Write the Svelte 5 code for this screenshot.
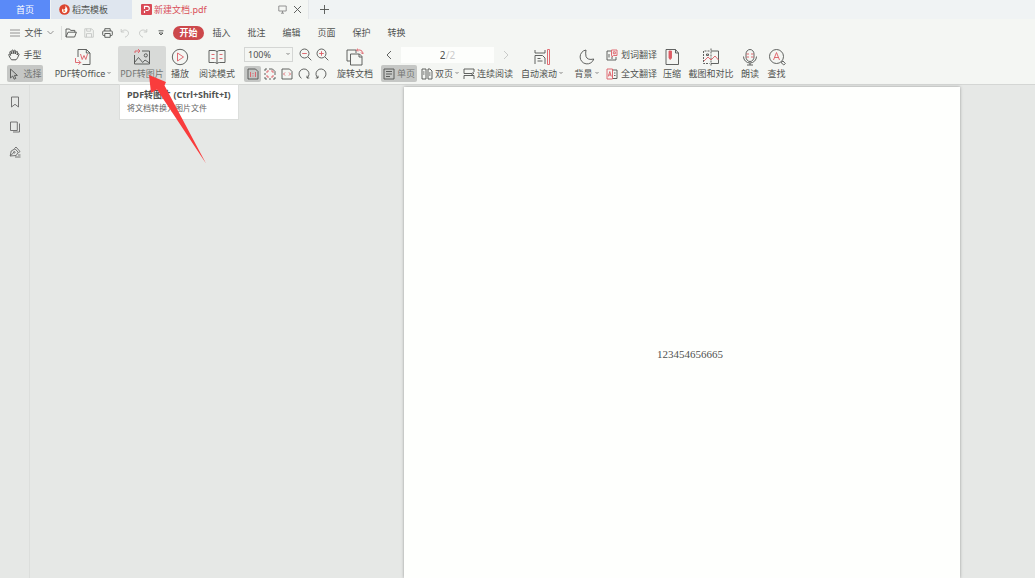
<script lang="ts">
  let zoom = $state('100%')
  let page = $state('2')

  const tabs = ['插入', '批注', '编辑', '页面', '保护', '转换']
</script>

{#snippet caret()}
  <svg class="caret" width="4" height="6" viewBox="0 0 4 6"><path d="M.5 1L2 2.500 3.500 1" /></svg>
{/snippet}

{#snippet chevron(dir: string)}
  <svg width="8" height="10" viewBox="0 0 8 10"><path d={dir === 'left' ? 'M6 1L2 5l4 4' : 'M2 1l4 4-4 4'} /></svg>
{/snippet}

<div class="app">
  <header class="titlebar">
    <button class="home">首页</button>
    <button class="doc template">
      <svg width="11" height="11" viewBox="0 0 11 11"><circle class="flame" cx="5.5" cy="5.5" r="5.3" /><path class="solid" d="M6.4 1.2C7 3 9 4 8.4 6.6 8 8.6 6.4 9.5 4.8 9 2.8 8.4 2.4 6 3.8 4.6 4 5.5 4.4 5.8 5 5.8 6.6 5 6.6 3 6.4 1.2z" /><circle class="core" cx="5.2" cy="7" r="1.1" /></svg>
      稻壳模板
    </button>
    <div class="doc current">
      <svg width="11" height="11" viewBox="0 0 11 11"><rect class="pdf" width="11" height="11" rx="1" /><path class="white" d="M3.5 9V6.8M3.5 5V2.3h2.7a2.1 2.1 0 010 4.2H4.7" /></svg>
      <span class="name">新建文档.pdf</span>
      <button aria-label="演示">
        <svg class="soft" width="9" height="9" viewBox="0 0 9 9"><path d="M.8 1h7.4v5H.8zM4.5 6v2M3 8.2h3" /></svg>
      </button>
      <button aria-label="关闭">
        <svg width="9" height="9" viewBox="0 0 9 9"><path d="M1 1l7 7M8 1L1 8" /></svg>
      </button>
    </div>
    <button class="add" aria-label="新建">
      <svg width="9" height="9" viewBox="0 0 9 9"><path d="M4.5 0v9M0 4.5h9" /></svg>
    </button>
  </header>

  <nav class="menubar">
    <button class="file">
      <svg class="soft" width="10" height="8" viewBox="0 0 10 8"><path d="M0 1h10M0 4h10M0 7h10" /></svg>
      文件
      <svg class="soft" width="7" height="5" viewBox="0 0 7 5"><path d="M.5 1l3 3 3-3" /></svg>
    </button>
    <div class="quick">
      <button aria-label="打开">
        <svg width="12" height="10" viewBox="0 0 12 10"><path d="M1 8.8V1h3.6l1 1.4h4.2v1.8M1 9l2-4.8h8.4L9.6 9z" /></svg>
      </button>
      <button aria-label="保存" disabled>
        <svg width="10" height="10" viewBox="0 0 10 10"><path d="M.8.8h6.800l1.700 1.700v6.700H.8zM2.700.8v2.400h4V.8M2.500 9.200V5.600h5v3.600" /></svg>
      </button>
      <button aria-label="打印">
        <svg width="11" height="10" viewBox="0 0 11 10"><path d="M2.8 3V.7h5.4V3M2.8 7.5H1.5Q.7 7.5.7 6.7V3.8Q.7 3 1.5 3h8q.8 0 .8.8v2.900q0 .8-.8.8H8.200M2.800 5.500h5.400v3.800H2.800z" /></svg>
      </button>
      <button aria-label="撤销" disabled>
        <svg width="10" height="10" viewBox="0 0 10 10"><path d="M1.2 1v3h3M1.4 3.8C3.8.8 8.5 1.8 8.5 5.2 8.5 7.4 6.6 8.4 5 9.2" /></svg>
      </button>
      <button aria-label="恢复" disabled>
        <svg width="10" height="10" viewBox="0 0 10 10"><path d="M8.8 1v3h-3M8.6 3.8C6.2.8 1.5 1.8 1.5 5.2 1.5 7.4 3.4 8.4 5 9.2" /></svg>
      </button>
      <button aria-label="更多">
        <svg width="6" height="6" viewBox="0 0 6 6"><path d="M.5.8h5M1 3l2 2 2-2z" /></svg>
      </button>
    </div>
    <button class="pill">开始</button>
    {#each tabs as tab}
      <button class="tab">{tab}</button>
    {/each}
  </nav>

  <div class="ribbon">
    <div class="stack modes">
      <button class="small">
        <svg width="12" height="12" viewBox="0 0 12 12"><path class="heavy" d="M3.5 10.8C2.2 9 .8 7 .8 5.4c.6-.6 1.4 0 1.8 1L1.8 3c.2-.8 1-.8 1.3 0l.8 2L3.8 1.6c.2-.8 1.2-.8 1.4 0l.5 3 .4-3c.3-.8 1.2-.7 1.3.1L7.2 5l1.2-2.4c.5-.6 1.3-.2 1.2.6L9 6l1-1.2c.7-.4 1.2.1 1 .8C10 8 9.3 9.6 8 10.8z" /></svg>
        手型
      </button>
      <button class="small on">
        <svg width="12" height="12" viewBox="0 0 12 12"><path d="M2.5 1v9l2.2-2 1.5 3.2 1.6-.8-1.4-3h3z" /></svg>
        <span>选择</span>
      </button>
    </div>

    <button class="big office">
      <svg width="18" height="18" viewBox="0 0 18 18"><path d="M4 9V1.5h8.5L16 5v11.5H8.500M12.300 1.500V5H16" /><path class="red" d="M6.500 6l1.700 5.500L10 7.500l1.800 4L13.500 6M1.500 10v4.500h5M4.500 12.300l2.200 2.200-2.200 2.200" /></svg>
      <span>PDF转Office {@render caret()}</span>
    </button>

    <div class="anchor">
      <button class="big image on">
        <svg width="18" height="18" viewBox="0 0 18 18"><path d="M1.5 7v9h15V3H9M1.5 14.5l4-5 4.2 5L12 12l4.5 3" /><circle cx="12.8" cy="7.4" r="1.6" /><path class="red" d="M2 5V3h4.8M5 1l2 2-2 2" /></svg>
        <span>PDF转图片</span>
      </button>
      <div class="tooltip" role="tooltip">
        <strong>PDF转图片 (Ctrl+Shift+I)</strong>
        <p>将文档转换为图片文件</p>
      </div>
      <svg class="pointer" width="60" height="90" viewBox="0 0 60 90"><path d="M1 0L18 7l-1.500 3.500L58 88.500 9 14.500 3 18z" /></svg>
    </div>

    <button class="big short">
      <svg width="18" height="18" viewBox="0 0 18 18"><circle cx="9" cy="9" r="7.7" /><path class="red" d="M6.5 5v8l6-4z" /></svg>
      <span>播放</span>
    </button>
    <button class="big">
      <svg width="18" height="18" viewBox="0 0 18 18"><path d="M9 3.5v12M9 3.5Q7.5 2.5 6 2.5H1v12h5.5q1.5 0 2.5 1 1-1 2.5-1H17v-12h-5q-1.500 0-3 1z" /><path class="red" d="M3.5 6.500h3M3.500 10.500h3M11.500 6.500h3M11.500 10.500h3" /></svg>
      <span>阅读模式</span>
    </button>

    <div class="stack zoom">
      <div class="row">
        <div class="scale">
          <select aria-label="缩放比例" bind:value={zoom}>
            <option>50%</option>
            <option>100%</option>
            <option>200%</option>
          </select>
          {@render caret()}
        </div>
        <button class="tool" aria-label="缩小">
          <svg width="13" height="13" viewBox="0 0 13 13"><circle cx="5.5" cy="5.5" r="4.5" /><path d="M9 9l3.3 3.3" /><path class="red" d="M3.2 5.5h4.6" /></svg>
        </button>
        <button class="tool" aria-label="放大">
          <svg width="13" height="13" viewBox="0 0 13 13"><circle cx="5.5" cy="5.5" r="4.5" /><path d="M9 9l3.3 3.3" /><path class="red" d="M3.2 5.5h4.6M5.5 3.2v4.6" /></svg>
        </button>
      </div>
      <div class="row">
        <button class="tool on" aria-label="实际大小">
          <svg width="12" height="12" viewBox="0 0 12 12"><path d="M1 1h7.5L11 3.5V11H1z" /><path class="red" d="M3.5 4v5M6 5v1M6 7.5v1M8.5 4v5" /></svg>
        </button>
        <button class="tool" aria-label="适合页面">
          <svg width="12" height="12" viewBox="0 0 12 12"><path d="M3 1H1v2M1 5v2M1 9v2h2M5 11h2M9 11h2V9M11 7V3.5L8.5 1H5" /><path class="red" d="M3 5V3h2M7 3h2v2M3 7v2h2M9 7v2H7" /></svg>
        </button>
        <button class="tool" aria-label="适合宽度">
          <svg width="12" height="12" viewBox="0 0 12 12"><path d="M1 1h7.5L11 3.5V11H1z" /><path class="red" d="M4 4.5L2.5 6 4 7.5M8 4.5L9.5 6 8 7.5" /></svg>
        </button>
        <button class="tool" aria-label="向左旋转">
          <svg width="12" height="12" viewBox="0 0 12 12"><path d="M3.5 10.3A5 5 0 119 10M9 7.7V10h2.3" /></svg>
        </button>
        <button class="tool" aria-label="向右旋转">
          <svg width="12" height="12" viewBox="0 0 12 12"><path d="M8.5 10.3A5 5 0 103 10M3 7.7V10H.7" /></svg>
        </button>
      </div>
    </div>

    <button class="big">
      <svg width="18" height="18" viewBox="0 0 18 18"><path d="M4 13H1V2h9v3M4.500 6h9L16 8.500v8.500H4.500zM13 6v3h3" /><path class="red" d="M12 3.500l-1.500-1.500L12 .7M10.500 2H14q2.500 0 2.500 3.500M15 4.500l1.500 1.500L18 4.500" /></svg>
      <span>旋转文档</span>
    </button>

    <div class="stack view">
      <div class="row">
        <button class="tool" aria-label="上一页">{@render chevron('left')}</button>
        <label class="pager">
          <input aria-label="页码" bind:value={page} />
          <span>/2</span>
        </label>
        <button class="tool" aria-label="下一页" disabled>{@render chevron('right')}</button>
      </div>
      <div class="row layouts">
        <button class="small on">
          <svg width="12" height="12" viewBox="0 0 12 12"><path d="M1 1h10v10H1zM3 3.5h6M3 6h6M3 8.5h4" /></svg>
          <span>单页</span>
        </button>
        <button class="small">
          <svg width="12" height="12" viewBox="0 0 12 12"><path d="M1 1h4v10H1zM7 1h2l2 2v8H7zM2 4h1.5M2 6h1.5M8 5h1.5M8 7h1.5" /></svg>
          双页 {@render caret()}
        </button>
        <button class="small">
          <svg width="12" height="12" viewBox="0 0 12 12"><path d="M1 1v4.500h8L11 3.500V1zM11 11V7.500H1V11M11 5L8 7.500" /></svg>
          连续阅读
        </button>
      </div>
    </div>

    <button class="big scroll">
      <svg width="18" height="18" viewBox="0 0 18 18"><path d="M2 2v3h10V2M2 16V7.500h7.500L12 10v6M4.500 10.500h3M4.500 13h5" /><path class="red" d="M14.500 1.500h2v15h-2z" /></svg>
      <span>自动滚动 {@render caret()}</span>
    </button>
    <button class="big background">
      <svg width="18" height="18" viewBox="0 0 18 18"><path d="M8 2A7 7 0 1015.8 11Q9.5 12.5 8 8.5 7.3 5 8 2z" /></svg>
      <span>背景 {@render caret()}</span>
    </button>

    <div class="stack translate">
      <button class="small">
        <svg width="12" height="12" viewBox="0 0 12 12"><path d="M5 2H1v9h9V8M3 5v3.5M5 9h2" /><path class="red" d="M5.500 1H11v5.500H7.500L6 8V6.500h-.5zM7.300 2.800h2v2h-2z" /></svg>
        划词翻译
      </button>
      <button class="small">
        <svg width="12" height="12" viewBox="0 0 12 12"><path d="M6.5 2H11v8.5H6.5M8 5h1.5M8 7.5h1.5" /><path class="red" d="M6.5 1H1v10h5.5zM2.3 8.5l1.500-5 1.500 5M2.700 7h2.200" /></svg>
        全文翻译
      </button>
    </div>

    <button class="big short">
      <svg width="18" height="18" viewBox="0 0 18 18"><path d="M3 1.5h9.5L15.5 5v11.5H3zM12.500 1.500V5h3" /><path class="red fill" d="M6 3h2.500v7L7.200 11.500 6 10zM6 5h2.500M6 7h2.500" /></svg>
      <span>压缩</span>
    </button>
    <button class="big shot">
      <svg width="18" height="18" viewBox="0 0 18 18"><path d="M9 3h7.5v12.5H9" /><path class="dash" d="M7.5 3h-6v12.5h6M9 .5v17" /><path class="red" d="M2 13l4-4 3 3 4-4 3.5 4" /><path d="M4.5 6h2v1.5h-2z" /></svg>
      <span>截图和对比</span>
    </button>
    <button class="big short">
      <svg width="18" height="18" viewBox="0 0 18 18"><path d="M5 6a4 4.500 0 018 0v3a4 4.500 0 01-8 0zM2.500 8.500a6.500 6.500 0 0013 0M9 15v2M6 17h6" /><path class="red" d="M5.500 6H8M10 6h2.500M5.500 9H8M10 9h2.500" /></svg>
      <span>朗读</span>
    </button>
    <button class="big find">
      <svg width="18" height="18" viewBox="0 0 18 18"><circle cx="8.5" cy="8.5" r="7" /><path d="M13 14.500l2-1.500 2.300 2.500-1.500 1.500z" /><path class="red" d="M5.500 12l3-7.500 3 7.500M6.500 9.500h4" /></svg>
      <span>查找</span>
    </button>
  </div>

  <main>
    <aside>
      <button aria-label="书签">
        <svg width="12" height="12" viewBox="0 0 12 12"><path d="M2.5 1h7v10L6 8.300 2.500 11z" /></svg>
      </button>
      <button aria-label="缩略图">
        <svg width="12" height="12" viewBox="0 0 12 12"><path d="M1.5 1h6.800v8.500H1.500zM10.500 2.500V11H4" /></svg>
      </button>
      <button aria-label="签名">
        <svg width="12" height="12" viewBox="0 0 12 12"><path d="M1.200 10l1-5L6 2.800l3.200 3.400-2 3.300zM1.200 10l3.600-3.500M5.500 2.500L7 1l4 4.500-1.500 1.200M6 11h5.500M9 9h2.500" /><circle cx="5.300" cy="6.300" r=".8" /></svg>
      </button>
    </aside>
    <div class="canvas">
      <article>123454656665</article>
    </div>
  </main>
</div>

<style>
  :global(body) {
    margin: 0;
    background: #e6e8e6;
  }
  .app {
    display: flex;
    flex-direction: column;
    height: 100vh;
    overflow: hidden;
    font: 9px/12px "Noto Sans", "Noto Sans CJK SC", sans-serif;
    color: #505250;
  }
  button {
    display: flex;
    align-items: center;
    justify-content: center;
    padding: 0;
    border: 0;
    background: none;
    font: inherit;
    color: inherit;
    white-space: nowrap;
  }
  button:disabled {
    color: #c4c6c4;
  }
  svg {
    flex: none;
    fill: none;
    stroke: currentColor;
    stroke-width: 0.9;
  }
  .red {
    stroke: #dc5c64;
  }
  .red.fill {
    fill: #dc5c64;
  }
  .soft {
    stroke: #888;
  }
  .heavy {
    stroke-width: 1;
  }
  .dash {
    stroke-dasharray: 2 1;
  }
  .caret {
    stroke: #777;
  }

  .titlebar {
    display: flex;
    flex: none;
    height: 19px;
    background: #f0f3f4;
  }
  .home {
    width: 50px;
    background: #5a8af8;
    color: #fff;
  }
  .doc {
    display: flex;
    align-items: center;
    gap: 2px;
  }
  .template {
    justify-content: flex-start;
    width: 81px;
    padding-left: 8px;
    box-sizing: border-box;
    margin-left: 1px;
    background: #dfe6ef;
  }
  .flame {
    fill: #dc4530;
    stroke: none;
  }
  .solid {
    fill: #fff;
    stroke: none;
  }
  .core {
    fill: #f08040;
    stroke: none;
  }
  .pdf {
    fill: #d94a55;
    stroke: none;
  }
  .white {
    stroke: #fff;
    stroke-width: 1.2;
  }
  .current {
    gap: 6px;
    width: 176px;
    padding: 0 6px 0 9px;
    box-sizing: border-box;
    background: #f4f6f3;
  }
  .name {
    flex: 1;
    margin-left: -4px;
    color: #d9505a;
  }
  .add {
    width: 32px;
    border-left: 1px solid #e4e7e9;
  }

  .menubar {
    display: flex;
    flex: none;
    align-items: center;
    height: 27px;
    background: #f4f6f3;
  }
  .file {
    gap: 4px;
    width: 52px;
    margin-left: 6px;
  }
  .quick {
    display: flex;
    margin-left: 3px;
    padding-right: 3px;
    border-left: 1px solid #dddfdd;
  }
  .quick button {
    width: 18px;
    height: 14px;
  }
  .pill {
    width: 31px;
    height: 14px;
    border-radius: 7px;
    background: #cc484b;
    color: #fff;
    font-weight: 700;
  }
  .tab {
    width: 35px;
  }

  .ribbon {
    display: flex;
    flex: none;
    height: 38px;
    padding-left: 7px;
    border-bottom: 1px solid #d4d6d4;
    background: #f4f6f3;
  }
  .stack {
    display: flex;
    flex-direction: column;
    flex: none;
    gap: 2px;
  }
  .row {
    display: flex;
    align-items: center;
    height: 17px;
  }
  .small {
    gap: 3px;
    height: 17px;
  }
  .on {
    border-radius: 2px;
    background: #c5c7c5;
  }
  .on span {
    color: #747674;
  }
  .modes {
    width: 36px;
    margin-right: 8px;
  }
  .big {
    flex: none;
    flex-direction: column;
    gap: 2px;
    width: 46px;
    height: 36px;
  }
  .big span {
    display: flex;
    align-items: center;
    gap: 2px;
  }
  .big.office {
    width: 64px;
    margin-right: 3px;
  }
  .big.image {
    width: 48px;
    background: #d8dad8;
  }
  .big.short {
    width: 28px;
  }
  .big.scroll {
    margin: 0 7px 0 5px;
  }
  .big.background {
    width: 29px;
  }
  .big.shot {
    width: 50px;
  }
  .big.find {
    width: 25px;
  }
  .anchor {
    position: relative;
  }
  .tooltip {
    position: absolute;
    z-index: 1;
    top: 38px;
    left: 1px;
    padding: 3px 7px 5px;
    border: 1px solid #dcdedc;
    background: #fff;
    white-space: nowrap;
  }
  .tooltip strong {
    display: block;
    line-height: 13px;
  }
  .tooltip p {
    margin: 0;
    font-size: 8px;
    line-height: 13px;
    color: #666;
  }
  .pointer {
    position: absolute;
    z-index: 2;
    top: 29px;
    left: 30px;
    fill: #f93c3c;
    stroke: none;
  }

  .zoom {
    width: 88px;
    margin-left: 4px;
  }
  .scale {
    display: flex;
    align-items: center;
    width: 49px;
    height: 15px;
    margin-right: 4px;
    padding-right: 2px;
    box-sizing: border-box;
    border: 1px solid #d4d6d4;
  }
  select {
    flex: 1;
    min-width: 0;
    padding: 0 3px;
    border: 0;
    appearance: none;
    background: none;
    font: inherit;
    color: inherit;
  }
  .tool {
    width: 17px;
    height: 16px;
  }
  .view {
    width: 133px;
    margin-left: 3px;
  }
  .view .row:first-child {
    justify-content: center;
    gap: 3px;
  }
  .pager {
    display: flex;
    align-items: center;
    justify-content: center;
    width: 95px;
    height: 16px;
    background: #fdfefc;
    font-size: 10px;
  }
  .pager input {
    width: 6px;
    padding: 0;
    border: 0;
    outline: 0;
    background: none;
    font: inherit;
    color: inherit;
  }
  .pager span {
    color: #ccc;
  }
  .layouts {
    gap: 4px;
  }
  .layouts .small {
    gap: 2px;
  }
  .layouts .on {
    width: 36px;
  }
  .translate {
    width: 49px;
    margin: 0 2px 0 6px;
  }

  main {
    display: flex;
    flex: 1;
    min-height: 0;
    background: #e6e8e6;
  }
  aside {
    display: flex;
    flex-direction: column;
    gap: 13px;
    width: 29px;
    padding-top: 11px;
    border-right: 1px solid #dcdedc;
    color: #666;
  }
  .canvas {
    display: grid;
    flex: 1;
    grid-template-columns: 374fr 556fr 75fr;
    padding-top: 2px;
  }
  article {
    display: flex;
    grid-column: 2;
    align-items: flex-start;
    justify-content: center;
    padding: 260px 0 0 16px;
    background: #fefffd;
    box-shadow: 0 0 3px #999;
    font: 11px/14px "Liberation Serif", serif;
  }
</style>
